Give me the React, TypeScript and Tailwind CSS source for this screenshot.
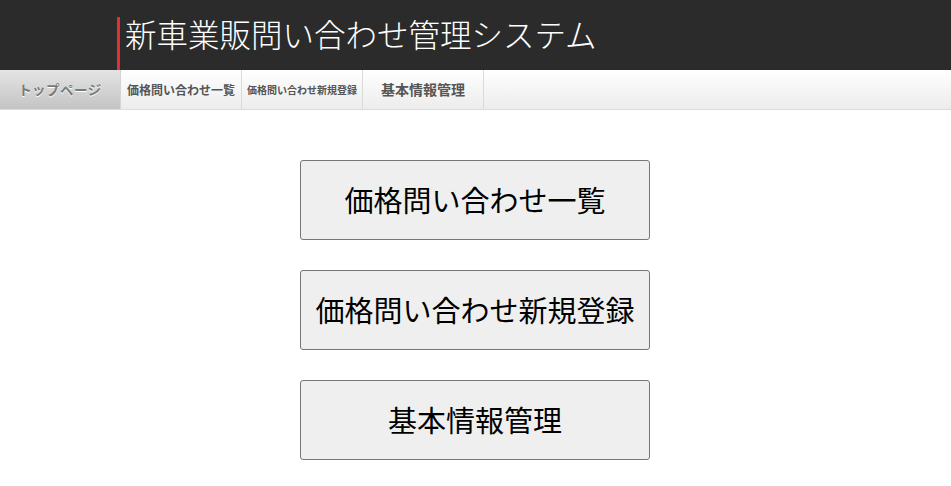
import React from "react";

const navItems = [
  { label: "トップページ", active: true, size: "text-[13.5px] tracking-[0.5px]" },
  { label: "価格問い合わせ一覧", active: false, size: "text-[12px]" },
  { label: "価格問い合わせ新規登録", active: false, size: "text-[10px]" },
  { label: "基本情報管理", active: false, size: "text-[14px]" },
];

const menuButtons = ["価格問い合わせ一覧", "価格問い合わせ新規登録", "基本情報管理"];

export default function App() {
  return (
    <div className="min-h-[486px] bg-white font-['Noto_Sans_CJK_JP',sans-serif]">
      {/* header */}
      <header className="h-[70px] bg-[#2b2b2b] pl-[117px] pt-[17px]">
        <div className="flex h-[53px] items-start border-l-[3px] border-[#e03030] pl-[5px]">
          <h1 className="-mt-[5px] text-[31.5px] font-light leading-[42px] text-white">
            新車業販問い合わせ管理システム
          </h1>
        </div>
      </header>

      {/* nav */}
      <nav className="flex h-[40px] border-b border-[#dcdcdc] bg-gradient-to-b from-white to-[#ececec]">
        {navItems.map((item) => (
          <div
            key={item.label}
            className={
              item.active
                ? "flex w-[121px] items-center justify-center border-r border-[#d4d4d4] bg-gradient-to-b from-[#e4e4e4] to-[#c4c4c4] font-bold text-[#7a7a7a] [text-shadow:0_1px_0_#fff]"
                : "flex w-[121px] items-center justify-center border-r border-[#dadada] font-bold text-[#555]"
            }
          >
            <span className={item.size}>{item.label}</span>
          </div>
        ))}
      </nav>

      {/* main menu */}
      <main className="flex flex-col items-center gap-[30px] pr-[1px] pt-[50px]">
        {menuButtons.map((label) => (
          <button
            key={label}
            className="h-[80px] w-[350px] rounded-[3px] border border-[#767676] bg-[#efefef] text-[29px] text-black"
          >
            {label}
          </button>
        ))}
      </main>
    </div>
  );
}
